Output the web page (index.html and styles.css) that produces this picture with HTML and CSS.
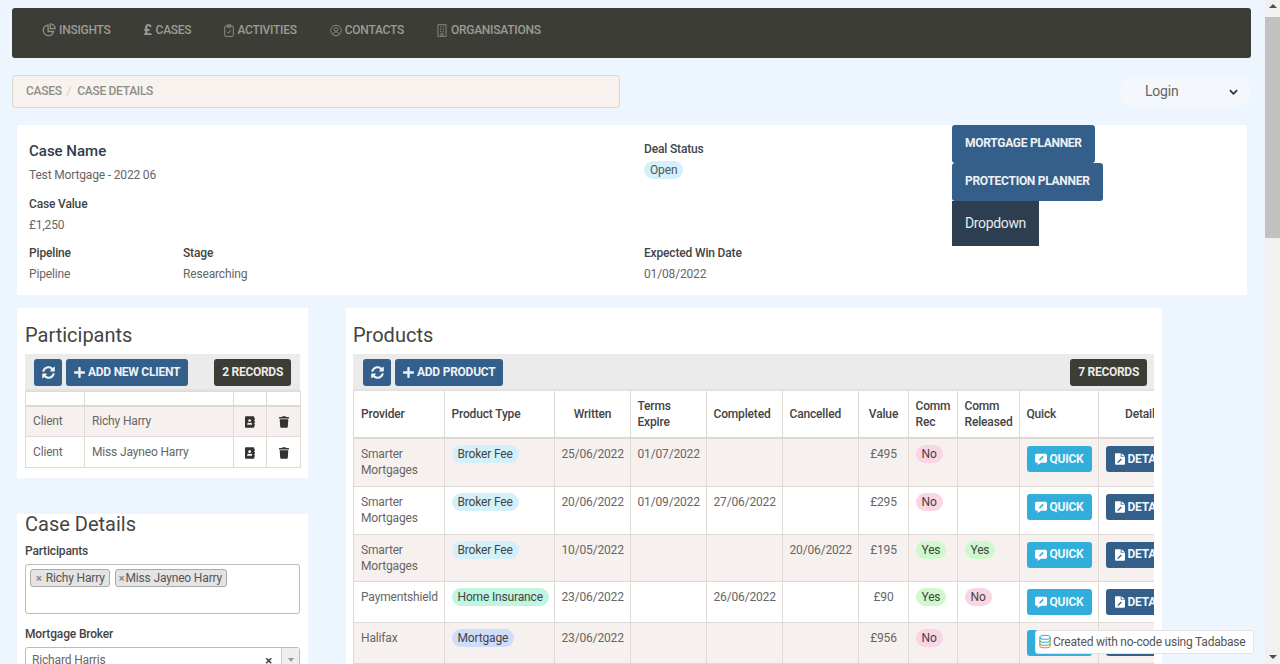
FILE: index.html
```html
<!DOCTYPE html>
<html lang="en">
<head>
<meta charset="utf-8">
<title>Case Details</title>
<link rel="stylesheet" href="styles.css">
</head>
<body>
<svg class="sprite" aria-hidden="true">
  <symbol id="i-sync" viewBox="0 0 512 512"><path d="M370.72 133.28C339.458 104.008 298.888 87.962 255.848 88c-77.458.068-144.328 53.178-162.791 126.85-1.344 5.363-6.122 9.15-11.651 9.15H24.103c-7.498 0-13.194-6.807-11.807-14.176C33.933 94.924 134.813 8 256 8c66.448 0 126.791 26.136 171.315 68.685L463.03 40.97C478.149 25.851 504 36.559 504 57.941V192c0 13.255-10.745 24-24 24H345.941c-21.382 0-32.09-25.851-16.971-40.971l41.75-41.749zM32 296h134.059c21.382 0 32.09 25.851 16.971 40.971l-41.75 41.75c31.262 29.273 71.835 45.319 114.876 45.28 77.418-.07 144.315-53.144 162.787-126.849 1.344-5.363 6.122-9.15 11.651-9.15h57.304c7.498 0 13.194 6.807 11.807 14.176C478.067 417.076 377.187 504 256 504c-66.448 0-126.791-26.136-171.315-68.685L48.97 471.03C33.851 486.149 8 475.441 8 454.059V320c0-13.255 10.745-24 24-24z"/></symbol>
  <symbol id="i-plus" viewBox="0 0 448 512"><path d="M416 208H272V64c0-17.67-14.33-32-32-32h-32c-17.67 0-32 14.33-32 32v144H32c-17.67 0-32 14.33-32 32v32c0 17.67 14.33 32 32 32h144v144c0 17.67 14.33 32 32 32h32c17.67 0 32-14.33 32-32V304h144c17.67 0 32-14.33 32-32v-32c0-17.67-14.33-32-32-32z"/></symbol>
  <symbol id="i-trash" viewBox="0 0 448 512"><path d="M432 32H312l-9.4-18.7A24 24 0 0 0 281.1 0H166.8a23.72 23.72 0 0 0-21.4 13.3L136 32H16A16 16 0 0 0 0 48v32a16 16 0 0 0 16 16h416a16 16 0 0 0 16-16V48a16 16 0 0 0-16-16zM53.2 467a48 48 0 0 0 47.9 45h245.8a48 48 0 0 0 47.9-45L416 128H32z"/></symbol>
  <symbol id="i-book" viewBox="0 0 448 512"><path d="M436 160c6.6 0 12-5.4 12-12v-40c0-6.6-5.4-12-12-12h-20V48c0-26.5-21.5-48-48-48H48C21.5 0 0 21.5 0 48v416c0 26.5 21.5 48 48 48h320c26.5 0 48-21.5 48-48v-48h20c6.6 0 12-5.4 12-12v-40c0-6.6-5.4-12-12-12h-20v-64h20c6.6 0 12-5.4 12-12v-40c0-6.6-5.4-12-12-12h-20v-64h20zm-228-32c35.3 0 64 28.7 64 64s-28.7 64-64 64-64-28.7-64-64 28.7-64 64-64zm112 236.8c0 10.6-10 19.2-22.4 19.2H118.4C106 384 96 375.4 96 364.8v-19.2c0-31.8 30.1-57.6 67.2-57.6h5c12.3 5.1 25.7 8 39.8 8s27.6-2.9 39.8-8h5c37.1 0 67.2 25.8 67.2 57.6v19.2z"/></symbol>
  <symbol id="i-comment" viewBox="0 0 16 16"><path fill="#fff" d="M2 1h12a2 2 0 0 1 2 2v8a2 2 0 0 1-2 2H8L3.500 16V13H2a2 2 0 0 1-2-2V3a2 2 0 0 1 2-2z"/><path fill="none" stroke="#31aedb" stroke-width="2" d="M6 9.500 11 4.500"/></symbol>
  <symbol id="i-file" viewBox="0 0 14 16"><path fill="#fff" d="M1.500 0H8V5h6v9.500a1.500 1.500 0 0 1-1.500 1.500h-11A1.500 1.500 0 0 1 0 14.500V1.500A1.500 1.500 0 0 1 1.500 0zM9.200 0 14 4H9.200z"/><path fill="none" stroke="#335f8a" stroke-width="1.800" d="M4 13 9 8"/></symbol>
  <symbol id="i-pie" viewBox="0 0 16 16"><g fill="none" stroke="currentColor" stroke-width="1.500"><path d="M7 2.500a6 6 0 1 0 6.300 7.200H7z"/><path d="M9.500 1a5.500 5.500 0 0 1 5.500 5.500H9.500z"/></g></symbol>
  <symbol id="i-clip" viewBox="0 0 12 16"><g fill="none" stroke="currentColor" stroke-width="1.200"><rect x=".7" y="2.500" width="10.600" height="12.800" rx="1.500"/><path d="M4 1h4v3H4z"/><path d="M3.500 9.500 5.300 11.300 8.500 7.500"/></g></symbol>
  <symbol id="i-user" viewBox="0 0 16 16"><g fill="none" stroke="currentColor" stroke-width="1.200"><circle cx="8" cy="8" r="7"/><circle cx="8" cy="6.500" r="2.500"/><path d="M3.500 13c.8-2.300 2.500-3 4.500-3s3.700.7 4.500 3"/></g></symbol>
  <symbol id="i-org" viewBox="0 0 12 16"><g fill="none" stroke="currentColor" stroke-width="1.100"><path d="M1 .8h10v14.400H1z"/><path d="M3.500 3.500h1.800M6.800 3.500h1.800M3.500 6.500h1.800M6.800 6.500h1.800M3.500 9.500h1.800M6.800 9.500h1.800M4.800 15v-3h2.400v3"/></g></symbol>
  <symbol id="i-db" viewBox="0 0 14 16"><ellipse cx="7" cy="3" rx="6" ry="2.400" fill="none" stroke="#4aa8d8" stroke-width="1.200"/><path d="M1 3v3.500c0 1.300 2.700 2.400 6 2.400s6-1.100 6-2.400V3" fill="none" stroke="#4aa8d8" stroke-width="1.200"/><path d="M1 6.500V10c0 1.300 2.700 2.400 6 2.400s6-1.100 6-2.400V6.500" fill="none" stroke="#5cb85c" stroke-width="1.200"/><path d="M1 10v3c0 1.300 2.700 2.400 6 2.400s6-1.100 6-2.400v-3" fill="none" stroke="#ef7d3c" stroke-width="1.200"/></symbol>
</svg>

<div class="page">
  <nav class="topnav">
    <a class="navlink"><svg class="ni ni-16"><use href="#i-pie"/></svg>INSIGHTS</a>
    <a class="navlink"><span class="pound">£</span>CASES</a>
    <a class="navlink"><svg class="ni ni-12"><use href="#i-clip"/></svg>ACTIVITIES</a>
    <a class="navlink"><svg class="ni ni-14"><use href="#i-user"/></svg>CONTACTS</a>
    <a class="navlink"><svg class="ni ni-org"><use href="#i-org"/></svg>ORGANISATIONS</a>
  </nav>

  <div class="crumbrow">
    <div class="crumbs"><span>CASES</span><span class="sep">/</span><span>CASE DETAILS</span></div>
    <div class="login"><span>Login</span><svg class="chev" viewBox="0 0 10 6"><path d="M1 1l4 4 4-4" fill="none" stroke="#333" stroke-width="2"/></svg></div>
  </div>

  <section class="case">
    <div class="case-left">
      <div class="f f-name"><h3 class="case-name">Case Name</h3><p class="val">Test Mortgage - 2022 06</p></div>
      <div class="f f-value"><div class="lab">Case Value</div><p class="val">£1,250</p></div>
      <div class="case-pair">
        <div class="pair-a"><div class="lab">Pipeline</div><p class="val">Pipeline</p></div>
        <div><div class="lab">Stage</div><p class="val">Researching</p></div>
      </div>
    </div>
    <div class="case-mid">
      <div><div class="lab">Deal Status</div><span class="tag t-blue t-open">Open</span></div>
      <div><div class="lab">Expected Win Date</div><p class="val">01/08/2022</p></div>
    </div>
    <div class="case-btns">
      <a class="cbtn">MORTGAGE PLANNER</a>
      <a class="cbtn cbtn-2">PROTECTION PLANNER</a>
      <a class="ddbtn">Dropdown</a>
    </div>
  </section>

  <div class="cols">
    <div class="left">
      <section class="panel p-part">
        <h2 class="ptitle">Participants</h2>
        <div class="bar">
          <a class="btn btn-ic"><svg class="ic"><use href="#i-sync"/></svg></a>
          <a class="btn"><svg class="ic-p"><use href="#i-plus"/></svg>ADD NEW CLIENT</a>
          <span class="rec">2 RECORDS</span>
        </div>
        <table class="tbl tbl-part">
          <colgroup><col class="c59"><col class="c149"><col class="c33"><col class="c34"></colgroup>
          <thead><tr class="blank"><th></th><th></th><th></th><th></th></tr></thead>
          <tbody>
            <tr class="odd"><td>Client</td><td>Richy Harry</td><td class="mid"><svg class="act"><use href="#i-book"/></svg></td><td class="mid"><svg class="act"><use href="#i-trash"/></svg></td></tr>
            <tr><td>Client</td><td>Miss Jayneo Harry</td><td class="mid"><svg class="act"><use href="#i-book"/></svg></td><td class="mid"><svg class="act"><use href="#i-trash"/></svg></td></tr>
          </tbody>
        </table>
      </section>

      <section class="panel p-details">
        <h2 class="ptitle pt2">Case Details</h2>
        <div class="lab lab-f">Participants</div>
        <div class="multi">
          <span class="chip"><i class="x">×</i>Richy Harry</span>
          <span class="chip chip-b"><i class="x">×</i>Miss Jayneo Harry</span>
        </div>
        <div class="lab lab-f lab-g">Mortgage Broker</div>
        <div class="single"><span>Richard Harris</span><b class="sx">×</b><span class="sarrow"><i></i></span></div>
      </section>
    </div>

    <section class="panel p-prod">
      <h2 class="ptitle">Products</h2>
      <div class="bar bar-p">
        <a class="btn btn-ic"><svg class="ic"><use href="#i-sync"/></svg></a>
        <a class="btn"><svg class="ic-p"><use href="#i-plus"/></svg>ADD PRODUCT</a>
        <span class="rec">7 RECORDS</span>
      </div>
      <div class="clip">
        <table class="tbl tbl-prod">
          <colgroup><col class="c91"><col class="c110"><col class="c76"><col class="c76"><col class="c77"><col class="c75"><col class="c50"><col class="c49"><col class="c62"><col class="c79"><col class="c100"></colgroup>
          <thead>
            <tr><th>Provider</th><th>Product Type</th><th class="ctr">Written</th><th>Terms Expire</th><th>Completed</th><th>Cancelled</th><th class="ctr">Value</th><th>Comm Rec</th><th>Comm Released</th><th>Quick</th><th class="th-det">Details</th></tr>
          </thead>
          <tbody>
            <tr class="odd"><td>Smarter Mortgages</td><td><span class="tag t-blue">Broker Fee</span></td><td class="ctr">25/06/2022</td><td>01/07/2022</td><td></td><td></td><td class="ctr">£495</td><td><span class="tag t-pink">No</span></td><td></td><td><a class="qbtn"><svg class="qi"><use href="#i-comment"/></svg>QUICK</a></td><td><a class="dbtn"><svg class="di"><use href="#i-file"/></svg>DETAILS</a></td></tr>
            <tr><td>Smarter Mortgages</td><td><span class="tag t-blue">Broker Fee</span></td><td class="ctr">20/06/2022</td><td>01/09/2022</td><td>27/06/2022</td><td></td><td class="ctr">£295</td><td><span class="tag t-pink">No</span></td><td></td><td><a class="qbtn"><svg class="qi"><use href="#i-comment"/></svg>QUICK</a></td><td><a class="dbtn"><svg class="di"><use href="#i-file"/></svg>DETAILS</a></td></tr>
            <tr class="odd"><td>Smarter Mortgages</td><td><span class="tag t-blue">Broker Fee</span></td><td class="ctr">10/05/2022</td><td></td><td></td><td>20/06/2022</td><td class="ctr">£195</td><td><span class="tag t-green">Yes</span></td><td><span class="tag t-green">Yes</span></td><td><a class="qbtn"><svg class="qi"><use href="#i-comment"/></svg>QUICK</a></td><td><a class="dbtn"><svg class="di"><use href="#i-file"/></svg>DETAILS</a></td></tr>
            <tr><td>Paymentshield</td><td><span class="tag t-mint">Home Insurance</span></td><td class="ctr">23/06/2022</td><td></td><td>26/06/2022</td><td></td><td class="ctr">£90</td><td><span class="tag t-green">Yes</span></td><td><span class="tag t-pink">No</span></td><td><a class="qbtn"><svg class="qi"><use href="#i-comment"/></svg>QUICK</a></td><td><a class="dbtn"><svg class="di"><use href="#i-file"/></svg>DETAILS</a></td></tr>
            <tr class="odd"><td>Halifax</td><td><span class="tag t-peri">Mortgage</span></td><td class="ctr">23/06/2022</td><td></td><td></td><td></td><td class="ctr">£956</td><td><span class="tag t-pink">No</span></td><td></td><td><a class="qbtn"><svg class="qi"><use href="#i-comment"/></svg>QUICK</a></td><td><a class="dbtn"><svg class="di"><use href="#i-file"/></svg>DETAILS</a></td></tr>
          </tbody>
        </table>
      </div>
    </section>
  </div>
</div>

<a class="badge"><svg class="dbi"><use href="#i-db"/></svg>Created with no-code using Tadabase</a>

<div class="sbar"><i class="arr up"></i><i class="thumb"></i><i class="arr down"></i></div>
</body>
</html>
```

FILE: styles.css
```css
* { box-sizing: border-box; }
html, body { margin: 0; height: 664px; overflow: hidden; }
body { background: #edf5fe; font-family: Roboto, "Liberation Sans", sans-serif; font-size: 12px; letter-spacing: -.16px; color: #555; }
.sprite { position: absolute; width: 0; height: 0; }
p, h2, h3 { margin: 0; }

.page { width: 1265px; padding: 8px 14px 0 12px; }

.topnav { height: 50px; background: #3d3d37; border-radius: 3px; display: flex; align-items: center; padding: 0 0 6px 30px; gap: 33px; }
.navlink { display: flex; align-items: center; gap: 3px; color: #9b9b93; font-weight: 500; letter-spacing: -.26px; }
.ni { color: #8f8f88; }
.ni-16 { width: 14px; height: 14px; }
.ni-14 { width: 12px; height: 13px; }
.ni-12 { width: 10px; height: 13px; }
.ni-org { width: 10px; height: 13px; margin-right: 1px; }
.pound { font-size: 14px; font-weight: 700; color: #9b9b93; margin-right: 1px; }

.crumbrow { display: flex; justify-content: space-between; margin-top: 17px; height: 33px; }
.crumbs { width: 608px; background: #f7f2ee; border: 1px solid #ddd9d2; border-radius: 3px; display: flex; align-items: center; padding: 0 0 2px 13px; color: #8e8e87; font-weight: 500; letter-spacing: -.3px; }
.sep { margin: 0 6px 0 5px; color: #ccc; font-weight: 400; }
.login { width: 131px; background: #f4f7fb; border-radius: 16px; display: flex; align-items: center; justify-content: space-between; padding: 0 13px 0 25px; font-size: 14px; letter-spacing: -.2px; color: #666; }
.login span { margin-bottom: 2px; }
.chev { width: 9px; height: 6px; }

.case { margin: 17px 4px 0 5px; height: 170px; background: #fff; display: flex; }
.case-left { width: 627px; padding: 17px 0 0 12px; }
.case-name { font-size: 15px; font-weight: 500; letter-spacing: 0; color: #2f3c4e; line-height: 18px; }
.lab { font-weight: 500; color: #444; line-height: 16px; }
.val { color: #666; line-height: 16px; }
.f-name .val { margin-top: 7px; }
.f-value { margin-top: 13px; }
.f-value .val { margin-top: 5px; }
.case-pair { display: flex; margin-top: 12px; }
.case-pair .val { margin-top: 5px; }
.pair-a { width: 154px; }
.case-mid { width: 308px; padding: 16px 0 0 0; display: flex; flex-direction: column; gap: 66px; }
.case-mid .val { margin-top: 5px; }
.case-btns { display: flex; flex-direction: column; align-items: flex-start; }
.cbtn { height: 38px; padding: 0 13px 2px; background: #335f8a; color: #eef2f6; border-radius: 3px; font-weight: 700; letter-spacing: -.28px; display: flex; align-items: center; }
.ddbtn { height: 45px; padding: 0 13px 2px; background: #2c3e50; color: #e6eaee; font-size: 14px; letter-spacing: -.35px; display: flex; align-items: center; }

.cols { display: flex; gap: 38px; margin: 13px 0 0 5px; }
.left { width: 291px; }
.panel { background: #fff; padding: 0 8px; }
.p-part { height: 170px; }
.ptitle { font-size: 20px; font-weight: 400; letter-spacing: 0; color: #444; line-height: 24px; padding-top: 15px; height: 46px; }
.bar { height: 37px; background: #ebebeb; border-bottom: 2px solid #e2e2e2; display: flex; align-items: center; padding: 1px 9px 0; gap: 4px; }
.bar-p { padding: 1px 7px 0 10px; }
.btn { height: 27px; padding: 0 8px; background: #335f8a; color: #eef2f6; border-radius: 3px; font-weight: 700; letter-spacing: -.25px; display: flex; align-items: center; gap: 3px; }
.btn-ic { padding: 0 7.500px; }
.ic { width: 13px; height: 13px; fill: #eef2f6; }
.ic-p { width: 11px; height: 13px; fill: #eef2f6; }
.rec { margin-left: auto; height: 27px; padding: 0 8px; background: #3d3d37; color: #eceae6; border-radius: 3px; font-weight: 700; letter-spacing: -.28px; display: flex; align-items: center; }

.tbl { border-collapse: collapse; table-layout: fixed; }
.tbl td, .tbl th { border: 1px solid #e0dad6; }
.tbl-part { width: 275px; }
.tbl-part .blank th { height: 14px; padding: 0; border-bottom: 2px solid #ddd9d2; }
.tbl-part td { height: 31px; padding: 0 7px; color: #666; }
.mid { text-align: center; }
.act { width: 10px; height: 12px; fill: #333; vertical-align: middle; }
.odd td { background: #f6f1ee; }

.c59 { width: 59px; } .c149 { width: 149px; } .c33 { width: 33px; } .c34 { width: 34px; }
.c91 { width: 91px; } .c110 { width: 110px; } .c76 { width: 76px; } .c77 { width: 76px; } .c75 { width: 76px; }
.c50 { width: 50px; } .c49 { width: 49px; } .c62 { width: 62px; } .c79 { width: 79px; } .c100 { width: 100px; }

.p-details { margin-top: 36px; height: 160px; }
.pt2 { padding-top: 0; height: 29px; line-height: 20px; }
.multi { margin-top: 5px; height: 50px; border: 1px solid #bbb; border-radius: 3px; background: #fff; padding: 4px; display: flex; align-items: flex-start; gap: 5px; }
.chip { height: 18px; padding: 0 4px; background: #e4e4e4; border: 1px solid #aaa; border-radius: 3px; color: #555; line-height: 16px; }
.chip .x { font-style: normal; color: #888; font-weight: 700; font-size: 11px; margin: 0 4px 0 1px; }
.chip-b { padding: 0 4px 0 2px; }
.chip-b .x { margin: 0 1px 0 1px; }
.lab-g { margin-top: 12px; }
.single { margin-top: 5px; height: 26px; border: 1px solid #bbb; border-radius: 3px; display: flex; align-items: center; padding-left: 6px; color: #666; }
.sx { margin-left: auto; margin-right: 9px; color: #444; font-size: 13px; }
.sarrow { width: 18px; align-self: stretch; background: #eee; border-left: 1px solid #ccc; display: flex; align-items: center; justify-content: center; }
.sarrow i { border: 3px solid transparent; border-top: 4px solid #999; border-bottom: 0; }

.p-prod { width: 816px; height: 400px; padding-left: 7px; }
.clip { width: 801px; overflow: hidden; }
.tbl-prod { width: 845px; }
.tbl-prod th { height: 47px; padding: 0 6.500px; font-weight: 500; text-align: left; color: #444; line-height: 16.500px; border-top: 0; border-bottom: 2px solid #ddd9d2; }
.tbl-prod td { padding: 7px 6.500px; line-height: 16.400px; color: #666; vertical-align: top; }
.tbl-prod th:first-child, .tbl-prod td:first-child { padding-left: 7px; }
.tbl-prod .ctr { text-align: center; }
.tbl-prod .th-det { padding-left: 26px; }
.tag { display: inline-block; padding: 0 6px; border-radius: 10px; color: #444; line-height: 18px; margin-top: -1px; vertical-align: top; white-space: nowrap; }
.t-open { margin-top: 4px; color: #555; }
.t-blue { background: #d4f0fb; }
.t-pink { background: #fad5e3; }
.t-green { background: #cff8cd; }
.t-mint { background: #c0f5e1; }
.t-peri { background: #cfdcfa; }
.qbtn, .dbtn { display: flex; align-items: center; gap: 3px; height: 26px; border-radius: 3px; color: #eef8fc; font-weight: 700; letter-spacing: -.25px; white-space: nowrap; }
.qbtn { width: 65px; background: #31aedb; padding-left: 8px; }
.dbtn { width: 90px; background: #335f8a; padding-left: 9px; }
.qi { width: 12px; height: 12px; }
.di { width: 10px; height: 12px; }

.badge { position: absolute; left: 1035px; top: 630px; width: 219px; height: 24px; background: #fff; border: 1px solid #e4e4e4; border-radius: 3px; display: flex; align-items: center; padding: 0 0 1px 3px; gap: 2px; letter-spacing: -.22px; color: #555; white-space: nowrap; }
.dbi { width: 12px; height: 15px; flex: none; }

.sbar { position: absolute; left: 1265px; top: 0; width: 15px; height: 664px; background: #f1f1f1; }
.thumb { position: absolute; left: 0; top: 17px; width: 15px; height: 221px; background: #c1c1c1; }
.arr { position: absolute; left: 4px; border: 4px solid transparent; }
.up { top: 4px; border-bottom: 4px solid #505050; border-top: 0; }
.down { bottom: 5px; border-top: 4px solid #505050; border-bottom: 0; }
```
